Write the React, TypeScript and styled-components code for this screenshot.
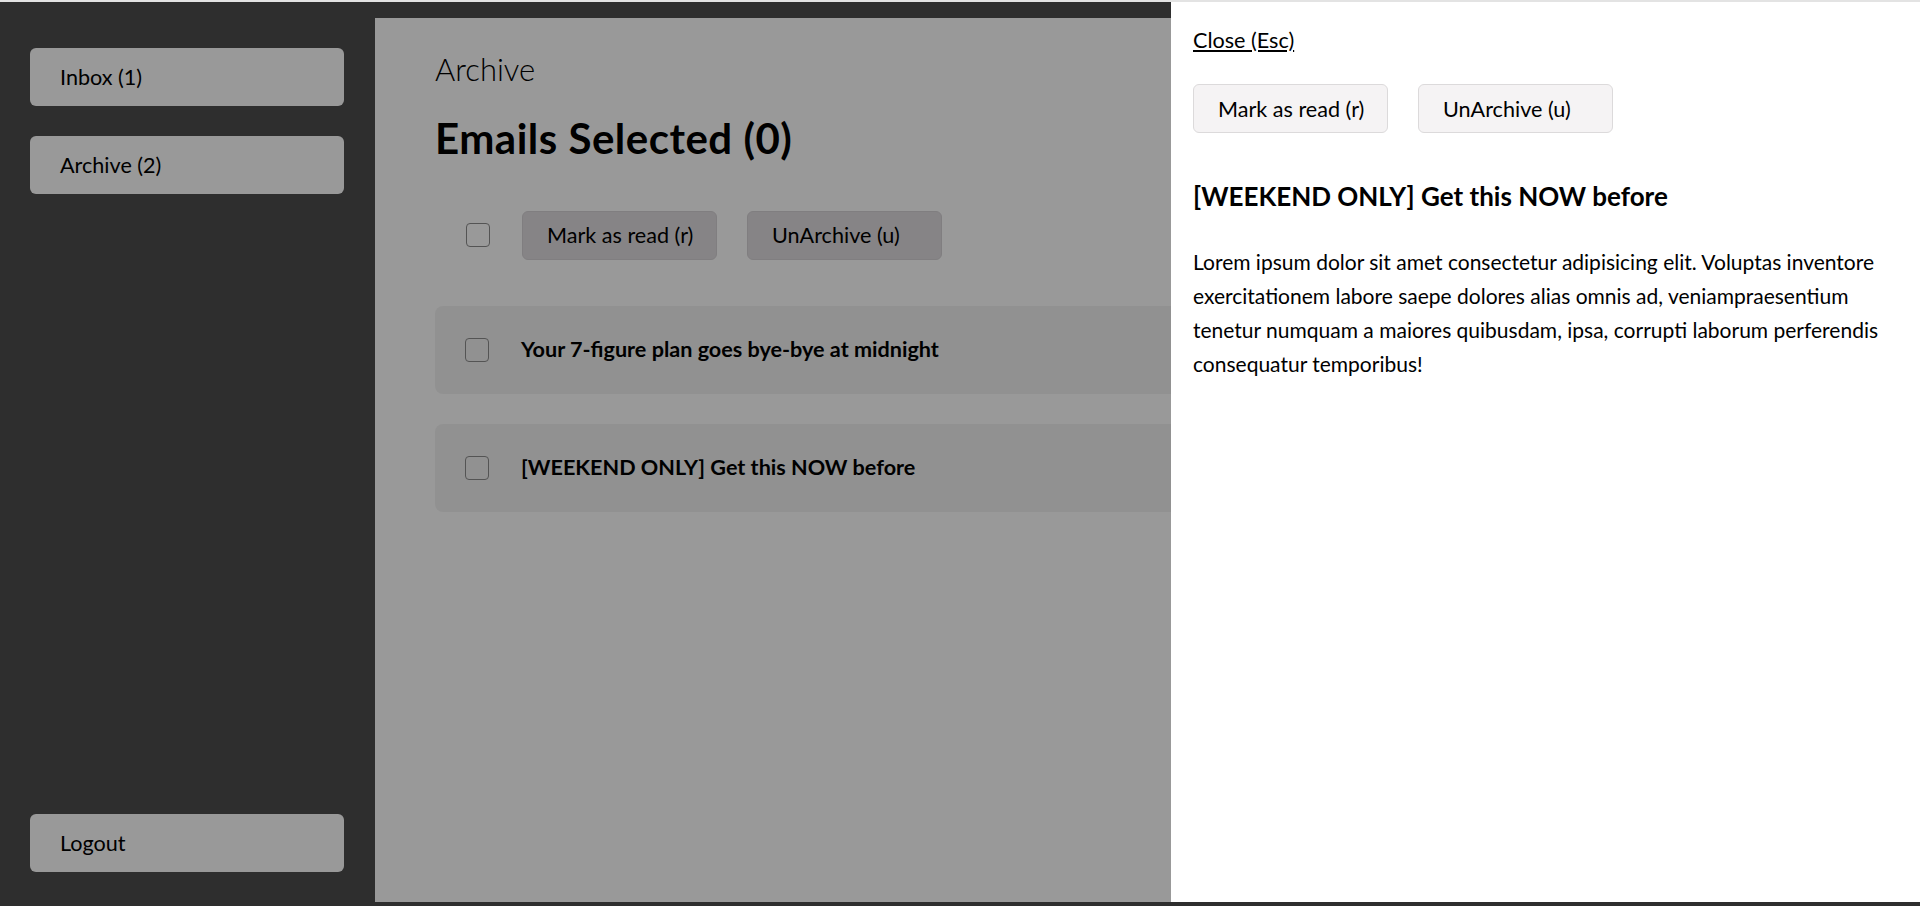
import styled, { createGlobalStyle } from 'styled-components';

const GlobalStyle = createGlobalStyle`
  * {
    box-sizing: border-box;
  }

  body {
    margin: 0;
    font-family: Lato, "Liberation Sans", sans-serif;
    font-size: 21.6px;
    line-height: 1.5;
    color: #000;
    background: #4d4d4d;
  }
`;

const emails = [
  { id: 1, subject: 'Your 7-figure plan goes bye-bye at midnight' },
  { id: 2, subject: '[WEEKEND ONLY] Get this NOW before' },
];

const body =
  'Lorem ipsum dolor sit amet consectetur adipisicing elit. Voluptas inventore exercitationem labore saepe dolores alias omnis ad, veniampraesentium tenetur numquam a maiores quibusdam, ipsa, corrupti laborum perferendis consequatur temporibus!';

export default function App(): JSX.Element {
  return (
    <>
      <GlobalStyle />
      <Page>
        <Sidebar>
          <NavGroup>
            <NavButton>Inbox (1)</NavButton>
            <NavButton>Archive (2)</NavButton>
          </NavGroup>
          <NavButton>Logout</NavButton>
        </Sidebar>

        <Main>
          <PageTitle>Archive</PageTitle>
          <SelectedHeading>Emails Selected (0)</SelectedHeading>

          <Toolbar>
            <Checkbox type="checkbox" />
            <ActionButton $muted>Mark as read (r)</ActionButton>
            <ActionButton $muted>UnArchive (u)</ActionButton>
          </Toolbar>

          <EmailList>
            {emails.map((email) => (
              <EmailRow key={email.id}>
                <Checkbox type="checkbox" />
                <Subject>{email.subject}</Subject>
              </EmailRow>
            ))}
          </EmailList>
        </Main>

        {/* dims everything behind the open email */}
        <Backdrop />

        <Drawer>
          <CloseLink href="#">Close (Esc)</CloseLink>
          <DrawerActions>
            <ActionButton>Mark as read (r)</ActionButton>
            <ActionButton>UnArchive (u)</ActionButton>
          </DrawerActions>
          <EmailTitle>[WEEKEND ONLY] Get this NOW before</EmailTitle>
          <EmailBody>{body}</EmailBody>
        </Drawer>
      </Page>
    </>
  );
}

const Page = styled.div`
  display: grid;
  grid-template-columns: 375px 1fr;
  height: 100vh;
  border-top: 2px solid #e3e3e3;
  padding-bottom: 4px;
  overflow: hidden;
`;

const Sidebar = styled.nav`
  display: flex;
  flex-direction: column;
  justify-content: space-between;
  padding: 46px 31px 30px 30px;
`;

const NavGroup = styled.div`
  display: flex;
  flex-direction: column;
  gap: 30px;
`;

const NavButton = styled.button`
  display: flex;
  align-items: center;
  height: 58px;
  width: 100%;
  padding: 0 30px;
  border: none;
  border-radius: 6px;
  background: #fff;
  font: inherit;
  color: #000;
  text-align: left;
  cursor: pointer;
`;

const Main = styled.main`
  margin-top: 16px;
  padding: 33px 60px;
  background: #fff;
`;

const PageTitle = styled.h2`
  margin: 0;
  font-size: 31px;
  font-weight: 300;
  line-height: 1.2;
`;

const SelectedHeading = styled.h1`
  margin: 25px 0 0;
  font-size: 42px;
  font-weight: 700;
  letter-spacing: 0.5px;
  line-height: 1.2;
`;

const Toolbar = styled.div`
  display: flex;
  align-items: center;
  gap: 30px;
  margin-top: 47px;
  padding: 0 31px;
`;

const Checkbox = styled.input`
  appearance: none;
  flex: none;
  width: 24px;
  height: 24px;
  margin: 0 2px 0 0;
  border: 1.5px solid #8c8c8c;
  border-radius: 4px;
  background: transparent;
`;

const ActionButton = styled.button<{ $muted?: boolean }>`
  display: flex;
  align-items: center;
  width: 195px;
  height: 49px;
  padding: 0 24px;
  border: 1px solid ${(p) => (p.$muted ? '#d6d3d6' : '#dcdadb')};
  border-radius: 6px;
  background: ${(p) => (p.$muted ? '#dfdcdf' : '#f5f3f4')};
  font: inherit;
  color: #000;
  white-space: nowrap;
  cursor: pointer;
`;

const EmailList = styled.div`
  display: flex;
  flex-direction: column;
  gap: 30px;
  margin-top: 46px;
`;

const EmailRow = styled.div`
  display: flex;
  align-items: center;
  gap: 30px;
  height: 88px;
  padding: 0 30px;
  border-radius: 8px;
  background: #f2f2f2;
`;

const Subject = styled.span`
  font-weight: 700;
`;

const Backdrop = styled.div`
  position: fixed;
  inset: 2px 0 0 0;
  background: rgba(0, 0, 0, 0.4);
`;

const Drawer = styled.aside`
  position: fixed;
  top: 2px;
  right: 0;
  bottom: 4px;
  width: 749px;
  padding: 22px 20px 0 22px;
  background: #fff;
  z-index: 1;
`;

const CloseLink = styled.a`
  color: #000;
  text-decoration: underline;
`;

const DrawerActions = styled.div`
  display: flex;
  gap: 30px;
  margin-top: 28px;
`;

const EmailTitle = styled.h3`
  margin: 47px 0 0;
  font-size: 26px;
  font-weight: 700;
  line-height: 1.3;
`;

const EmailBody = styled.p`
  margin: 31px 0 0;
  font-size: 21px;
  line-height: 33.8px;
`;
